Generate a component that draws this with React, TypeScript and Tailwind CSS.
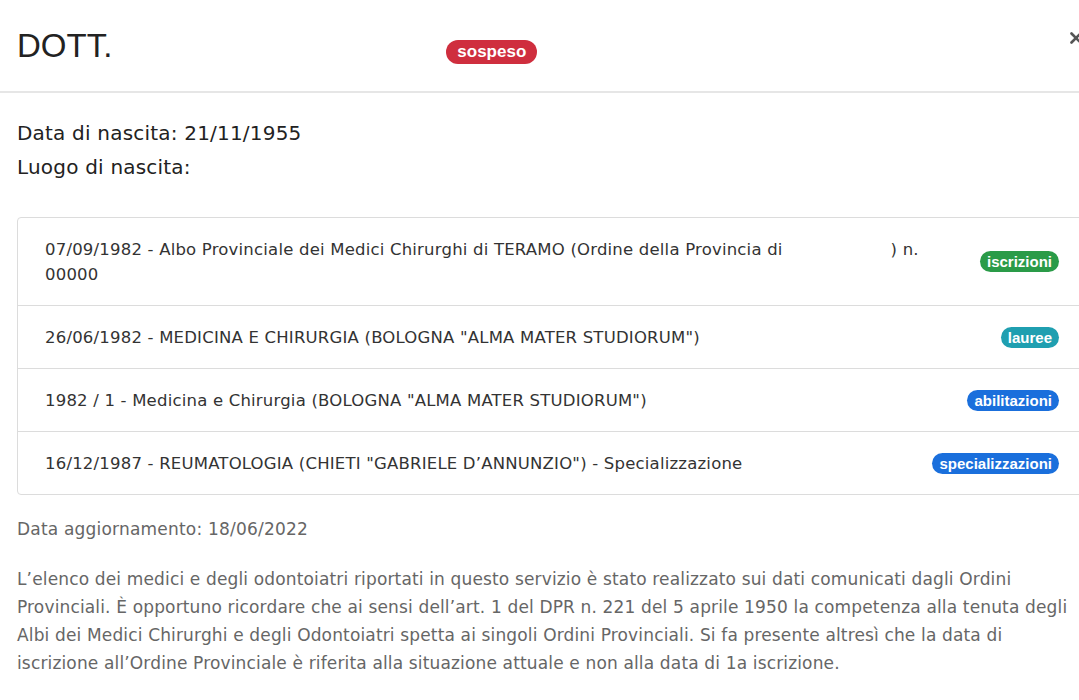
import { X } from "lucide-react";

type Row = {
  text: React.ReactNode;
  badge: string;
  color: string;
};

const rows: Row[] = [
  {
    text: (
      <>
        07/09/1982 - Albo Provinciale dei Medici Chirurghi di TERAMO (Ordine della Provincia di
        <span className="inline-block w-[108px]" />) n.
        <br />
        00000
      </>
    ),
    badge: "iscrizioni",
    color: "bg-[#2a9b48]",
  },
  {
    text: '26/06/1982 - MEDICINA E CHIRURGIA (BOLOGNA "ALMA MATER STUDIORUM")',
    badge: "lauree",
    color: "bg-[#1f9fb0]",
  },
  {
    text: '1982 / 1 - Medicina e Chirurgia (BOLOGNA "ALMA MATER STUDIORUM")',
    badge: "abilitazioni",
    color: "bg-[#1a6fdc]",
  },
  {
    text: '16/12/1987 - REUMATOLOGIA (CHIETI "GABRIELE D\u2019ANNUNZIO") - Specializzazione',
    badge: "specializzazioni",
    color: "bg-[#1a6fdc]",
  },
];

function Badge({ label, color }: { label: string; color: string }) {
  return (
    <span
      className={`${color} inline-flex h-[21px] items-center rounded-full px-[7px] text-[15px] font-bold leading-none text-white font-['Liberation_Sans',Arial,sans-serif]`}
    >
      {label}
    </span>
  );
}

export default function App() {
  return (
    <div className="h-[700px] w-[1079px] overflow-hidden bg-white">
      <div className="w-[1104px] font-['DejaVu_Sans',sans-serif]">
        <div className="flex h-[93px] items-center border-b-2 border-[#e6e6e6] px-[17px]">
          <h1 className="text-[33px] leading-none text-[#222] font-['Liberation_Sans',Arial,sans-serif]">
            DOTT.
          </h1>
          <span className="ml-[334px] mt-[12px] inline-flex h-[24px] items-center rounded-full bg-[#cf2e3e] px-[11px] text-[17px] font-bold leading-none text-white font-['Liberation_Sans',Arial,sans-serif]">
            sospeso
          </span>
          <div className="flex-1" />
          <div className="self-start pt-[29px] pr-[2px] text-[#555]">
            <X size={18} strokeWidth={3.5} />
          </div>
        </div>

        <div className="px-[17px]">
          <div className="pt-[23px] text-[20px] leading-[34px] tracking-[0.2px] text-[#222]">
            <p>Data di nascita: 21/11/1955</p>
            <p>Luogo di nascita:</p>
          </div>

          <div className="mt-[33px] overflow-hidden rounded-[4px] border border-[#dcdcdc]">
            {rows.map((row, i) => (
              <div
                key={i}
                className={`flex items-center justify-between px-[27px] py-[18.5px] ${
                  i < rows.length - 1 ? "border-b border-[#dcdcdc]" : ""
                }`}
              >
                <div className="whitespace-nowrap text-[16.5px] leading-[25px] tracking-[0.2px] text-[#333]">
                  {row.text}
                </div>
                <Badge label={row.badge} color={row.color} />
              </div>
            ))}
          </div>

          <p className="mt-[22px] text-[17px] leading-[24px] tracking-[0.2px] text-[#666]">
            Data aggiornamento: 18/06/2022
          </p>

          <p className="mt-[24px] whitespace-nowrap text-[17px] leading-[28px] tracking-[0.15px] text-[#666]">
            L’elenco dei medici e degli odontoiatri riportati in questo servizio è stato realizzato sui dati comunicati dagli Ordini
            <br />
            Provinciali. È opportuno ricordare che ai sensi dell’art. 1 del DPR n. 221 del 5 aprile 1950 la competenza alla tenuta degli
            <br />
            Albi dei Medici Chirurghi e degli Odontoiatri spetta ai singoli Ordini Provinciali. Si fa presente altresì che la data di
            <br />
            iscrizione all’Ordine Provinciale è riferita alla situazione attuale e non alla data di 1a iscrizione.
          </p>
        </div>
      </div>
    </div>
  );
}
